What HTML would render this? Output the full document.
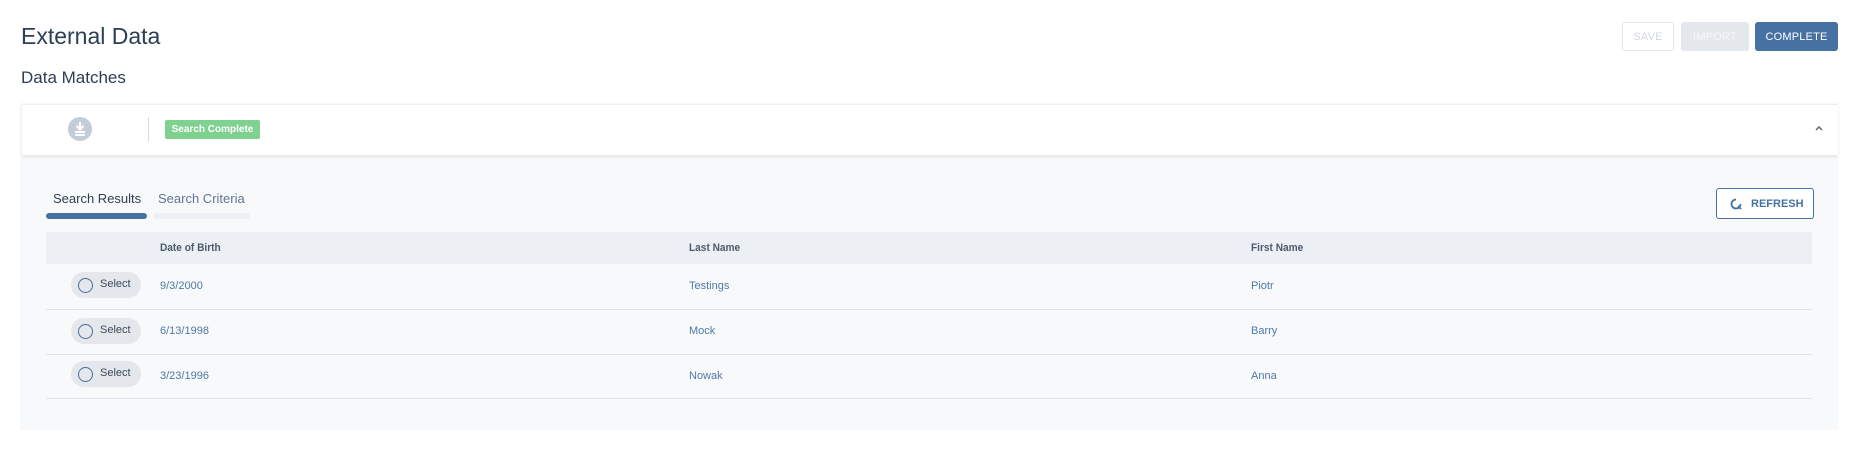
<!DOCTYPE html>
<html><head><meta charset="utf-8"><style>
*{box-sizing:border-box;margin:0;padding:0}
body{width:1855px;height:457px;background:#fff;font-family:"Liberation Sans",sans-serif;position:relative;overflow:hidden;color:#2d3e50}
.a{position:absolute}
.btn{position:absolute;top:22px;height:29px;border-radius:3px;font-size:11px;display:flex;align-items:center;justify-content:center;letter-spacing:0.2px}
.th{position:absolute;top:242px;font-size:11px;color:#4a5a70;font-weight:bold;transform:scaleX(.92);transform-origin:left}
.td{position:absolute;font-size:11px;color:#4f79a8}
.line{position:absolute;left:46px;width:1766px;height:1px;background:#e0e4e8}
.pill{position:absolute;left:71px;width:70px;height:26px;border-radius:13px;background:#e4e7eb;font-size:11px;color:#3a4a5e}
.pill i{position:absolute;left:7px;top:6px;width:15px;height:15px;border:1.5px solid #4a6d9a;border-radius:50%}
.pill span{position:absolute;left:29px;top:6px}
</style></head><body>
<div class="a" style="left:21px;top:23px;font-size:23px;color:#2c3e55">External Data</div>
<div class="a" style="left:21px;top:68px;font-size:17px;color:#2c3e55">Data Matches</div>
<div class="btn" style="left:1622px;width:52px;border:1px solid #e2e6ea;color:#d4d9df">SAVE</div>
<div class="btn" style="left:1681px;width:68px;background:#e4e7eb;color:#f5f6f8">IMPORT</div>
<div class="btn" style="left:1755px;width:83px;background:#4571a3;color:#fff">COMPLETE</div>
<div class="a" style="left:20px;top:103px;width:1818px;height:327px;background:#f7f9fb"></div>
<div class="a" style="left:22px;top:104px;width:1816px;height:51px;background:#fff;box-shadow:0 2px 3px rgba(0,0,0,.08);border-top:1px solid #eceff2"></div>
<svg class="a" style="left:68px;top:117px" width="24" height="24" viewBox="0 0 24 24"><circle cx="12" cy="12" r="12" fill="#c2cdd9"/><path d="M12 5v7M8.5 9l3.5 3.5L15.5 9" stroke="#fff" stroke-width="2.2" fill="none"/><rect x="7" y="14" width="10" height="2" fill="#fff"/><rect x="7" y="17" width="10" height="2" fill="#fff"/></svg>
<div class="a" style="left:148px;top:117px;width:1px;height:25px;background:#d5dbe1"></div>
<div class="a" style="left:165px;top:120px;width:95px;height:19px;background:#7fd18f;border-radius:2px;color:#fff;font-size:10px;font-weight:bold;text-align:center;line-height:19px">Search Complete</div>
<svg class="a" style="left:1813px;top:124px" width="12" height="8" viewBox="0 0 12 8"><path d="M3 6l3-3 3 3" stroke="#666" stroke-width="1.5" fill="none"/></svg>
<div class="a" style="left:53px;top:191px;font-size:13px;color:#2f3e52">Search Results</div>
<div class="a" style="left:158px;top:191px;font-size:13px;color:#5f7694">Search Criteria</div>
<div class="a" style="left:46px;top:213px;width:101px;height:6px;border-radius:3px;background:#4571a3"></div>
<div class="a" style="left:153px;top:213px;width:97px;height:6px;border-radius:3px;background:#edf0f4"></div>
<div class="a" style="left:1716px;top:188px;width:98px;height:31px;border:1px solid #4571a3;border-radius:3px;background:#fff;font-size:11px;color:#4571a3;font-weight:bold"><svg class="a" style="left:12px;top:8px" width="14" height="14" viewBox="0 0 14 14"><path d="M11.5 7A4.5 4.5 0 1 1 7 2.5" stroke="#4571a3" stroke-width="1.8" fill="none"/><path d="M9 9l3 3" stroke="#4571a3" stroke-width="1.8"/></svg><span class="a" style="left:34px;top:9px">REFRESH</span></div>
<div class="a" style="left:46px;top:232px;width:1766px;height:32px;background:#ecf0f4"></div>
<div class="th" style="left:160px">Date of Birth</div>
<div class="th" style="left:689px">Last Name</div>
<div class="th" style="left:1251px">First Name</div>
<div class="pill" style="top:272px"><i></i><span>Select</span></div>
<div class="td" style="left:160px;top:280px">9/3/2000</div><div class="td" style="left:689px;top:280px">Testings</div><div class="td" style="left:1251px;top:280px">Piotr</div>
<div class="line" style="top:309px"></div>
<div class="pill" style="top:318px"><i></i><span>Select</span></div>
<div class="td" style="left:160px;top:325px">6/13/1998</div><div class="td" style="left:689px;top:325px">Mock</div><div class="td" style="left:1251px;top:325px">Barry</div>
<div class="line" style="top:354px"></div>
<div class="pill" style="top:361px"><i></i><span>Select</span></div>
<div class="td" style="left:160px;top:370px">3/23/1996</div><div class="td" style="left:689px;top:370px">Nowak</div><div class="td" style="left:1251px;top:370px">Anna</div>
<div class="line" style="top:398px"></div>
</body></html>
